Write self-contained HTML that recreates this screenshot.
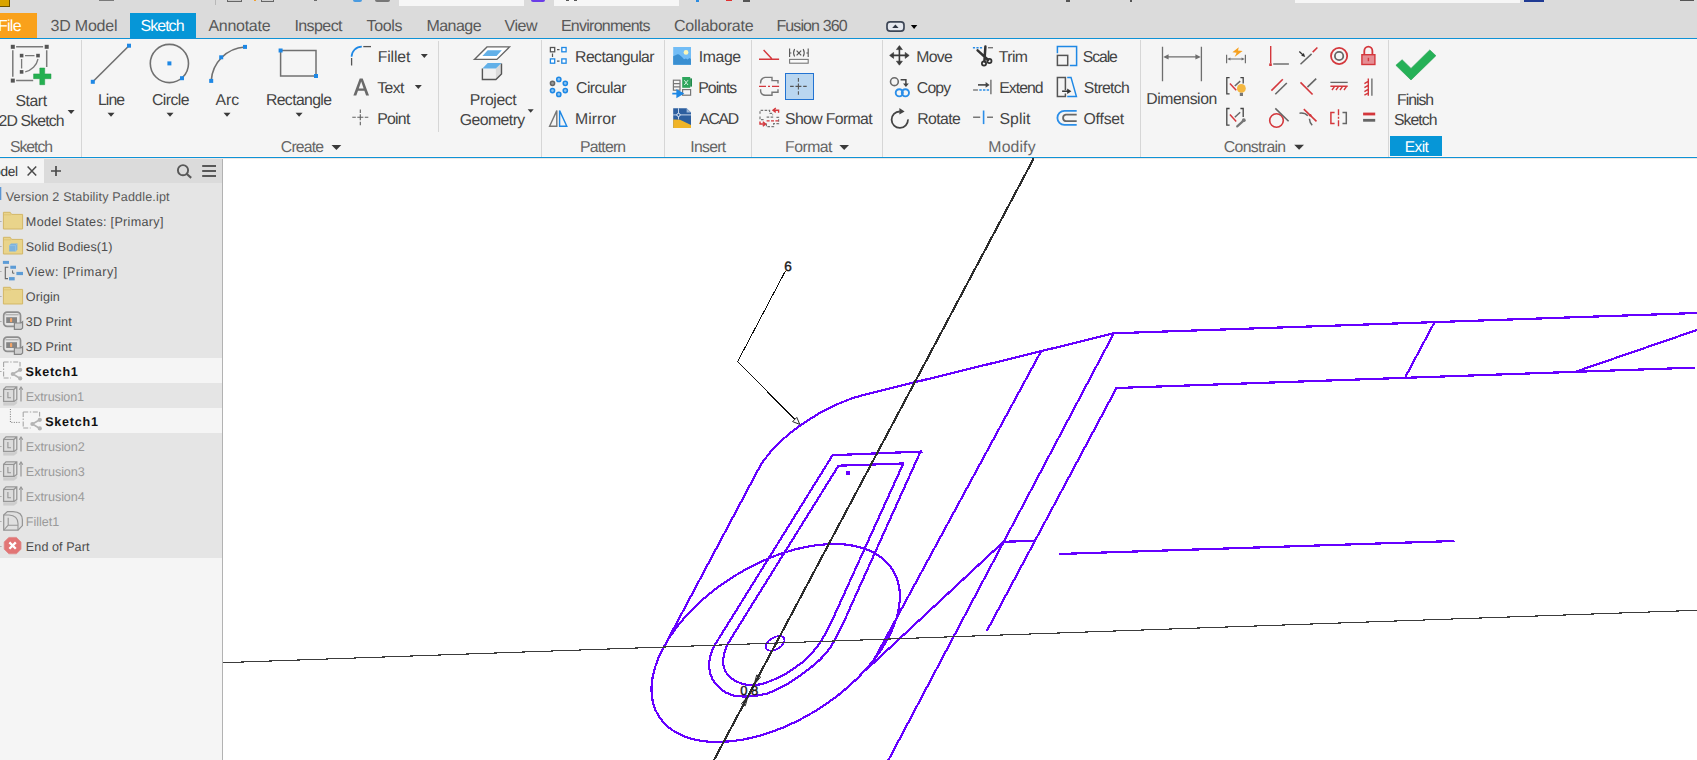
<!DOCTYPE html>
<html lang="en"><head><meta charset="utf-8"><title>Autodesk Inventor - Sketch</title>
<style>
html,body{margin:0;padding:0;background:#fff;}
body{font-family:"Liberation Sans",sans-serif;}
#app{position:relative;width:1697px;height:760px;overflow:hidden;background:#ffffff;}
.abs,.t,.ov{position:absolute;}
.t{z-index:3;white-space:pre;line-height:1;text-rendering:geometricPrecision;font-family:"Liberation Sans",sans-serif;}
.ov{overflow:hidden;display:block;}
.sep{position:absolute;width:1px;background:#d6d6d6;}

</style></head>
<body>
<div id="app">
<!-- title strip + tab bar -->
<div class="abs" style="left:0;top:0;width:1697px;height:38px;background:#dbdbdb"></div>
<div class="abs" style="left:0;top:0;width:10px;height:7px;background:#d9a400;border-right:1px solid #6b5200;border-bottom:1px solid #6b5200;box-sizing:border-box"></div>
<div class="abs" style="left:99px;top:0;width:15px;height:1px;background:#7a7a7a"></div>
<div class="abs" style="left:215px;top:0;width:1px;height:5px;background:#b8b8b8"></div>
<div class="abs" style="left:226.5px;top:0;width:15px;height:2px;box-sizing:border-box;border:1px solid #666;border-top:none;background:#c8c8c8"></div>
<div class="abs" style="left:254px;top:0;width:2px;height:1px;background:#f0a030"></div>
<div class="abs" style="left:261px;top:0;width:12.5px;height:2px;box-sizing:border-box;border:1px solid #666;border-top:none;background:#d0d0d0"></div>
<div class="abs" style="left:314px;top:0;width:3px;height:1px;background:#6a6a6a"></div>
<div class="abs" style="left:353px;top:0;width:9px;height:2px;background:#4a9be0;border-radius:0 0 4px 4px"></div>
<div class="abs" style="left:375px;top:0;width:15px;height:2px;background:#777;border-radius:0 0 7px 7px"></div>
<div class="abs" style="left:399px;top:0;width:125px;height:5.5px;background:#f6f6f6"></div>
<div class="abs" style="left:531px;top:0;width:14px;height:2px;background:#6a3de8;border-radius:0 0 7px 7px"></div>
<div class="abs" style="left:554px;top:0;width:125px;height:5.5px;background:#f6f6f6"></div>
<div class="abs" style="left:566px;top:0;width:3px;height:1px;background:#555"></div>
<div class="abs" style="left:574px;top:0;width:3px;height:1px;background:#555"></div>
<div class="abs" style="left:696px;top:0;width:3px;height:1.5px;background:#2a8be0"></div>
<div class="abs" style="left:726px;top:0;width:6px;height:1px;background:#e03030"></div>
<div class="abs" style="left:743px;top:0;width:7px;height:1.5px;background:#555"></div>
<div class="abs" style="left:1066px;top:0;width:4px;height:1.5px;background:#555"></div>
<div class="abs" style="left:1130px;top:0;width:2px;height:2px;background:#555"></div>
<div class="abs" style="left:1295px;top:0;width:225px;height:3.3px;background:#f6f6f6"></div>
<div class="abs" style="left:1524px;top:0;width:20px;height:2px;background:#1f3a93"></div>
<div class="abs" style="left:1680px;top:0;width:14px;height:1px;background:#555"></div>
<!-- tabs -->
<div class="abs" style="left:0;top:13px;width:37px;height:25px;background:#f9a11b"></div>
<div class="abs" style="left:130px;top:13px;width:66px;height:25px;background:#0696d7"></div>
<!-- ribbon -->
<div class="abs" style="left:0;top:37.8px;width:1697px;height:1.5px;background:#0f92d6"></div>
<div class="abs" style="left:0;top:39.3px;width:1697px;height:117.5px;background:#f5f5f5"></div>
<div class="abs" style="left:0;top:156.7px;width:1697px;height:1.6px;background:#0f92d6"></div>
<div class="abs" style="left:0;top:155.9px;width:1697px;height:0.9px;background:#fcf9f6"></div>
<div class="abs" style="left:0;top:158.3px;width:1697px;height:0.8px;background:#eee7e4"></div>
<div class="sep" style="left:81px;top:40px;height:117px"></div>
<div class="sep" style="left:438px;top:41px;height:90.8px"></div>
<div class="sep" style="left:541px;top:40px;height:117px"></div>
<div class="sep" style="left:664px;top:40px;height:117px"></div>
<div class="sep" style="left:751px;top:40px;height:117px"></div>
<div class="sep" style="left:882px;top:40px;height:117px"></div>
<div class="sep" style="left:1140px;top:40px;height:117px"></div>
<div class="sep" style="left:1388px;top:40px;height:117px"></div>
<div class="abs" style="left:784.8px;top:72.8px;width:29px;height:27px;box-sizing:border-box;background:#b9d6f0;border:1.2px solid #2273d2"></div>
<div class="abs" style="left:1390.3px;top:136.2px;width:51.7px;height:19.8px;background:#0696d7"></div>
<!-- browser -->
<div class="abs" style="left:0;top:158.9px;width:222px;height:399.1px;background:#e5e5e5"></div>
<div class="abs" style="left:0;top:158.9px;width:222px;height:24.2px;background:#dbdbdb"></div>
<div class="abs" style="left:0;top:158.9px;width:44px;height:24.2px;background:#f4f4f4"></div>
<div class="abs" style="left:0;top:358.3px;width:222px;height:24.6px;background:#f5f5f5"></div>
<div class="abs" style="left:0;top:408.3px;width:222px;height:24.6px;background:#f5f5f5"></div>
<div class="abs" style="left:0;top:558px;width:222px;height:202px;background:#f5f5f5"></div>
<div class="abs" style="left:221.8px;top:159px;width:1.2px;height:601px;background:#b2b2b2"></div>

<span class="t" style="left:-2.06px;top:19.00px;font-size:16px;color:#ffffff;letter-spacing:-0.720px">File</span>
<span class="t" style="left:50.44px;top:19.00px;font-size:16px;color:#585858;letter-spacing:-0.195px">3D Model</span>
<span class="t" style="left:140.44px;top:19.00px;font-size:16px;color:#ffffff;letter-spacing:-0.960px">Sketch</span>
<span class="t" style="left:208.44px;top:19.00px;font-size:16px;color:#585858;letter-spacing:-0.278px">Annotate</span>
<span class="t" style="left:294.44px;top:19.00px;font-size:16px;color:#585858;letter-spacing:-0.579px">Inspect</span>
<span class="t" style="left:366.44px;top:19.00px;font-size:16px;color:#585858;letter-spacing:-0.310px">Tools</span>
<span class="t" style="left:426.44px;top:19.00px;font-size:16px;color:#585858;letter-spacing:-0.542px">Manage</span>
<span class="t" style="left:504.44px;top:19.00px;font-size:16px;color:#585858;letter-spacing:-0.424px">View</span>
<span class="t" style="left:560.94px;top:19.00px;font-size:16px;color:#585858;letter-spacing:-0.746px">Environments</span>
<span class="t" style="left:674.04px;top:19.00px;font-size:16px;color:#585858;letter-spacing:-0.231px">Collaborate</span>
<span class="t" style="left:776.44px;top:19.00px;font-size:16px;color:#585858;letter-spacing:-0.895px">Fusion 360</span>
<span class="t" style="left:15.45px;top:94.00px;font-size:15.8px;color:#444444;letter-spacing:-0.442px">Start</span>
<span class="t" style="left:-1.55px;top:114.00px;font-size:15.8px;color:#444444;letter-spacing:-0.848px">2D Sketch</span>
<span class="t" style="left:9.95px;top:140.00px;font-size:15.8px;color:#666666;letter-spacing:-1.038px">Sketch</span>
<span class="t" style="left:97.95px;top:93.00px;font-size:15.8px;color:#444444;letter-spacing:-0.890px">Line</span>
<span class="t" style="left:151.95px;top:93.00px;font-size:15.8px;color:#444444;letter-spacing:-0.554px">Circle</span>
<span class="t" style="left:215.45px;top:93.00px;font-size:15.8px;color:#444444;letter-spacing:-0.049px">Arc</span>
<span class="t" style="left:265.95px;top:93.00px;font-size:15.8px;color:#444444;letter-spacing:-0.629px">Rectangle</span>
<span class="t" style="left:280.85px;top:140.00px;font-size:15.8px;color:#666666;letter-spacing:-0.843px">Create</span>
<span class="t" style="left:377.65px;top:50.00px;font-size:15.8px;color:#444444;letter-spacing:-0.131px">Fillet</span>
<span class="t" style="left:377.15px;top:81.00px;font-size:15.8px;color:#444444;letter-spacing:-0.593px">Text</span>
<span class="t" style="left:377.15px;top:112.00px;font-size:15.8px;color:#444444;letter-spacing:-0.702px">Point</span>
<span class="t" style="left:469.85px;top:93.00px;font-size:15.8px;color:#444444;letter-spacing:-0.378px">Project</span>
<span class="t" style="left:459.75px;top:113.00px;font-size:15.8px;color:#444444;letter-spacing:-0.550px">Geometry</span>
<span class="t" style="left:575.05px;top:50.00px;font-size:15.8px;color:#444444;letter-spacing:-0.568px">Rectangular</span>
<span class="t" style="left:576.05px;top:81.00px;font-size:15.8px;color:#444444;letter-spacing:-0.574px">Circular</span>
<span class="t" style="left:575.05px;top:112.00px;font-size:15.8px;color:#444444;letter-spacing:0.011px">Mirror</span>
<span class="t" style="left:580.05px;top:140.00px;font-size:15.8px;color:#666666;letter-spacing:-0.805px">Pattern</span>
<span class="t" style="left:698.85px;top:50.00px;font-size:15.8px;color:#444444;letter-spacing:-0.400px">Image</span>
<span class="t" style="left:698.35px;top:81.00px;font-size:15.8px;color:#444444;letter-spacing:-1.020px">Points</span>
<span class="t" style="left:699.15px;top:112.00px;font-size:15.8px;color:#444444;letter-spacing:-1.295px">ACAD</span>
<span class="t" style="left:690.35px;top:140.00px;font-size:15.8px;color:#666666;letter-spacing:-0.722px">Insert</span>
<span class="t" style="left:785.05px;top:112.00px;font-size:15.8px;color:#444444;letter-spacing:-0.643px">Show Format</span>
<span class="t" style="left:785.05px;top:140.00px;font-size:15.8px;color:#666666;letter-spacing:-0.525px">Format</span>
<span class="t" style="left:916.35px;top:50.00px;font-size:15.8px;color:#444444;letter-spacing:-0.745px">Move</span>
<span class="t" style="left:916.85px;top:81.00px;font-size:15.8px;color:#444444;letter-spacing:-0.862px">Copy</span>
<span class="t" style="left:917.15px;top:112.00px;font-size:15.8px;color:#444444;letter-spacing:-0.568px">Rotate</span>
<span class="t" style="left:998.75px;top:50.00px;font-size:15.8px;color:#444444;letter-spacing:-0.598px">Trim</span>
<span class="t" style="left:999.25px;top:81.00px;font-size:15.8px;color:#444444;letter-spacing:-0.956px">Extend</span>
<span class="t" style="left:999.55px;top:112.00px;font-size:15.8px;color:#444444;letter-spacing:0.018px">Split</span>
<span class="t" style="left:1082.75px;top:50.00px;font-size:15.8px;color:#444444;letter-spacing:-1.102px">Scale</span>
<span class="t" style="left:1083.85px;top:81.00px;font-size:15.8px;color:#444444;letter-spacing:-0.673px">Stretch</span>
<span class="t" style="left:1083.55px;top:112.00px;font-size:15.8px;color:#444444;letter-spacing:-0.231px">Offset</span>
<span class="t" style="left:988.35px;top:140.00px;font-size:15.8px;color:#666666;letter-spacing:0.135px">Modify</span>
<span class="t" style="left:1146.35px;top:92.00px;font-size:15.8px;color:#444444;letter-spacing:-0.467px">Dimension</span>
<span class="t" style="left:1223.85px;top:140.00px;font-size:15.8px;color:#666666;letter-spacing:-0.663px">Constrain</span>
<span class="t" style="left:1397.05px;top:93.00px;font-size:15.8px;color:#444444;letter-spacing:-1.007px">Finish</span>
<span class="t" style="left:1393.95px;top:113.00px;font-size:15.8px;color:#444444;letter-spacing:-0.958px">Sketch</span>
<span class="t" style="left:1404.76px;top:140.00px;font-size:15.5px;color:#ffffff;letter-spacing:-0.586px">Exit</span>
<span class="t" style="left:-6.68px;top:165.00px;font-size:13.6px;color:#333333;letter-spacing:-0.350px">odel</span>
<span class="t" style="left:5.66px;top:191.00px;font-size:12.6px;color:#5a5a5a;letter-spacing:0.150px">Version 2 Stability Paddle.ipt</span>
<span class="t" style="left:25.86px;top:216.00px;font-size:12.6px;color:#4d4d4d;letter-spacing:0.304px">Model States: [Primary]</span>
<span class="t" style="left:25.86px;top:241.00px;font-size:12.6px;color:#4d4d4d;letter-spacing:0.077px">Solid Bodies(1)</span>
<span class="t" style="left:25.86px;top:266.00px;font-size:12.6px;color:#4d4d4d;letter-spacing:0.502px">View: [Primary]</span>
<span class="t" style="left:25.86px;top:291.00px;font-size:12.6px;color:#4d4d4d;letter-spacing:0.078px">Origin</span>
<span class="t" style="left:25.86px;top:316.00px;font-size:12.6px;color:#4d4d4d;letter-spacing:0.040px">3D Print</span>
<span class="t" style="left:25.86px;top:341.00px;font-size:12.6px;color:#4d4d4d;letter-spacing:0.040px">3D Print</span>
<span class="t" style="left:25.56px;top:366.00px;font-size:12.6px;color:#111111;letter-spacing:0.645px;font-weight:700">Sketch1</span>
<span class="t" style="left:25.86px;top:391.00px;font-size:12.6px;color:#9a9a9a;letter-spacing:-0.148px">Extrusion1</span>
<span class="t" style="left:45.16px;top:416.00px;font-size:12.6px;color:#111111;letter-spacing:0.745px;font-weight:700">Sketch1</span>
<span class="t" style="left:25.86px;top:441.00px;font-size:12.6px;color:#9a9a9a;letter-spacing:-0.070px">Extrusion2</span>
<span class="t" style="left:25.86px;top:466.00px;font-size:12.6px;color:#9a9a9a;letter-spacing:-0.070px">Extrusion3</span>
<span class="t" style="left:25.86px;top:491.00px;font-size:12.6px;color:#9a9a9a;letter-spacing:-0.070px">Extrusion4</span>
<span class="t" style="left:25.86px;top:516.00px;font-size:12.6px;color:#9a9a9a;letter-spacing:-0.035px">Fillet1</span>
<span class="t" style="left:25.86px;top:541.00px;font-size:12.6px;color:#4d4d4d;letter-spacing:0.057px">End of Part</span>
<span class="t" style="left:784.22px;top:260.00px;font-size:13.6px;color:#111111;letter-spacing:0.000px;-webkit-text-stroke:0.4px #222">6</span>
<span class="t" style="left:740.34px;top:684.00px;font-size:13.0px;color:#111111;letter-spacing:-0.034px;-webkit-text-stroke:0.4px #222">0.8</span>
<svg class="ov" width="1697" height="158" viewBox="0 0 1697 158" style="left:0;top:0">
<defs>
<path id="dd" d="M0,0 L7,0 L3.5,4 Z" fill="#3a3a3a"/>
<rect id="bsq" x="-2" y="-2" width="4" height="4" fill="#1e88e5"/>
<rect id="gsq" x="-2" y="-2" width="4" height="4" fill="#555"/>
</defs>
<!-- tab bar minimize toggle -->
<rect x="887" y="21.8" width="17" height="9.4" rx="3.2" fill="#e6e9ef" stroke="#3d4656" stroke-width="1.7"/>
<path d="M892.2,27.9 L895.4,24.4 L898.6,27.9 Z" fill="#2c3442"/>
<path d="M910.9,25.1 L917.3,25.1 L914.1,28.9 Z" fill="#000"/>
<!-- dropdown arrows -->
<use href="#dd" x="67.6" y="110"/>
<use href="#dd" x="107.5" y="112.8"/>
<use href="#dd" x="166.5" y="112.8"/>
<use href="#dd" x="223.5" y="112.8"/>
<use href="#dd" x="295.6" y="112.8"/>
<path d="M331.5,145 L341.3,145 L336.4,150 Z" fill="#3a3a3a"/>
<use href="#dd" x="420.8" y="54"/>
<use href="#dd" x="414.8" y="85"/>
<path d="M527.7,109.3 L533.7,109.3 L530.7,112.8 Z" fill="#3a3a3a"/>
<path d="M839.4,145 L849,145 L844.2,150 Z" fill="#3a3a3a"/>
<path d="M1294.2,144.8 L1304,144.8 L1299.1,149.8 Z" fill="#3a3a3a"/>
<!-- Start 2D Sketch -->
<g stroke="#7a7a7a" stroke-width="1.5" fill="none">
<path d="M16.1,46.8 H43.1 M12.8,50.2 V76.8 M46.7,50.2 V67 M16.1,80.6 H33.2"/>
<path d="M25,55.6 H34.5 M21.6,59 V68.5" stroke-width="1.3"/>
<path d="M38,59 A16.4,16.4 0 0 1 25.2,71.8" stroke-width="1.3"/>
</g>
<use href="#gsq" x="12.8" y="46.8"/><use href="#gsq" x="46.7" y="46.8"/><use href="#gsq" x="12.8" y="80.6"/>
<rect x="19.8" y="53.8" width="3.6" height="3.6" fill="#555"/><rect x="36.2" y="53.8" width="3.6" height="3.6" fill="#555"/><rect x="19.8" y="70.1" width="3.6" height="3.6" fill="#555"/>
<path d="M39.8,68 H44.7 V73.9 H51 V78.7 H44.7 V84.7 H39.8 V78.7 H33.6 V73.9 H39.8 Z" fill="#25b050" stroke="#1f9a45" stroke-width="0.5"/>
<!-- Line -->
<path d="M92.8,81.8 L129,45.7" stroke="#707070" stroke-width="1.6" fill="none"/>
<use href="#bsq" x="92.8" y="81.8"/><use href="#bsq" x="129" y="45.7"/>
<!-- Circle -->
<circle cx="169.4" cy="63.5" r="19.1" stroke="#707070" stroke-width="1.6" fill="none"/>
<use href="#bsq" x="169.4" y="63.4"/><use href="#bsq" x="182" y="78.2"/>
<!-- Arc -->
<path d="M211.2,80.9 A36,36 0 0 1 245,47" stroke="#707070" stroke-width="1.6" fill="none"/>
<use href="#bsq" x="211.2" y="80.9"/><use href="#bsq" x="245" y="46.9"/><use href="#bsq" x="221.2" y="57.3"/>
<!-- Rectangle -->
<rect x="280.6" y="50.5" width="35.4" height="25.5" stroke="#707070" stroke-width="1.5" fill="none"/>
<use href="#bsq" x="280.6" y="50.5"/><use href="#bsq" x="316" y="76"/>
<!-- Fillet -->
<path d="M363.3,46.6 H371" stroke="#555" stroke-width="1.3" fill="none"/>
<path d="M351.6,58 V65.5" stroke="#555" stroke-width="1.3" fill="none"/>
<path d="M361.8,46.6 A10.2,10.2 0 0 0 351.6,56.8" stroke="#1e88e5" stroke-width="1.6" fill="none"/>
<!-- Text A -->
<path d="M353.4,95.6 L359.7,78.6 H362.7 L369,95.6 H366.1 L364.4,90.8 H358 L356.3,95.6 Z M358.8,88.5 H363.6 L361.2,81.6 Z" fill="#6a6a6a" fill-rule="evenodd"/>
<!-- Point -->
<path d="M352.3,117.2 H355.8 M357.3,117.2 H363.3 M364.8,117.2 H368.3 M360.3,109.6 V113 M360.3,114.2 V120.2 M360.3,121.7 V125.2" stroke="#606060" stroke-width="1.1" fill="none"/>
<!-- Project Geometry -->
<path d="M474.4,59.4 L487,46.9 L509.5,46.9 L496.9,59.4 Z" fill="#ffffff" stroke="#666" stroke-width="1.4"/>
<path d="M482.4,56.1 L487.7,50.3 L501.8,50.3 L496.6,56.1 Z" fill="#62b0e8"/>
<path d="M482.4,68.6 H495.9 V79.5 H482.4 Z" fill="#f0f0f0"/>
<path d="M495.9,68.6 L501.5,63 V74 L495.9,79.5 Z" fill="#dadada"/>
<path d="M482.4,68.6 L487.7,63 L501.5,63 L495.9,68.6 Z" fill="#62b0e8"/>
<path d="M482.4,68.6 V79.5 H495.9 L501.5,74 V63.4" fill="none" stroke="#555" stroke-width="1.4"/>
<!-- Rectangular pattern -->
<g fill="#fff" stroke-width="1.3">
<rect x="550.4" y="47.5" width="4.3" height="4.3" stroke="#555"/>
<rect x="561.8" y="47.5" width="4.3" height="4.3" stroke="#1e88e5"/>
<rect x="550.4" y="58.9" width="4.3" height="4.3" stroke="#1e88e5"/>
<rect x="561.8" y="58.9" width="4.3" height="4.3" stroke="#1e88e5"/>
</g>
<path d="M557,49.7 H559.5 M552.5,53.5 V57 M557,61.1 H559.5" stroke="#555" stroke-width="1.2"/>
<!-- Circular pattern -->
<g stroke-width="1.5" fill="#8cc4f2" stroke="#1e88e5">
<circle cx="558.8" cy="79.4" r="2.1"/><circle cx="565.3" cy="83.3" r="2.1"/><circle cx="565.3" cy="90.6" r="2.1"/><circle cx="558.8" cy="94.4" r="2.1"/><circle cx="552.5" cy="90.6" r="2.1"/>
<circle cx="552.5" cy="83.3" r="2.1" fill="#999" stroke="#666"/>
</g>
<!-- Mirror -->
<path d="M549.6,126.2 L556.8,110.6 V126.2 Z" stroke="#777" stroke-width="1.4" fill="none"/>
<path d="M559.6,110.6 V126.2 H566.8 Z" stroke="#1e88e5" stroke-width="1.4" fill="none"/>
<!-- Image -->
<rect x="673.2" y="47" width="17.8" height="17.8" fill="#72bdf6"/>
<path d="M673.2,56.2 L676,54.9 Q678.3,53.6 680.2,55.4 L682,57 L684,59.3 L686,58.4 L687.5,59.6 L689.5,58 L691,59 V64.8 H673.2 Z" fill="#3a8fd1"/>
<circle cx="686" cy="52.4" r="2.4" fill="#fbf6b8"/>
<!-- Points -->
<g stroke="#777" stroke-width="1.2" fill="none"><rect x="673.4" y="80.2" width="6.6" height="10"/><path d="M673.4,83.6 H680 M673.4,86.9 H680"/><rect x="682.6" y="89.6" width="8" height="5.6"/></g>
<rect x="682.2" y="77" width="8" height="10.8" fill="#2da55c"/><rect x="690.2" y="78.4" width="1.8" height="8.2" fill="#1f8a49"/>
<path d="M684.3,80.2 L688,85 M688,80.2 L684.3,85" stroke="#d6f2e0" stroke-width="1"/>
<path d="M672.3,93.6 H679 M677.2,90.4 L682.6,93.6 L677.2,96.8 Z" stroke="#1e88e5" stroke-width="1.7" fill="#1e88e5"/>
<!-- ACAD -->
<path d="M673.2,108.2 H686.6 L691,112.6 V128 H673.2 Z" fill="#2d5f9f"/>
<path d="M686.6,108.2 L691,112.6 H686.6 Z" fill="#9db8da"/>
<path d="M673.2,114.9 H691 M678.5,108.2 V119.5" stroke="#c8d6ea" stroke-width="1"/>
<circle cx="678.5" cy="114.9" r="1.6" fill="#2d5f9f" stroke="#e6eef8" stroke-width="0.9"/>
<path d="M673.2,119.6 L680,119.8 L691,125 V128 H673.2 Z" fill="#f0b428"/>
<!-- Format: construction -->
<path d="M759,59.2 H779.1 M763.6,50.1 L771.8,58.8" stroke="#d4373c" stroke-width="1.4" fill="none"/>
<!-- Format: driven dim |(x)| -->
<g stroke="#555" stroke-width="1.1" fill="none">
<path d="M789.6,48.6 V57 M808.2,48.6 V57 M789.6,53 H791.4 M806.4,53 H808.2"/>
<path d="M794.6,49 Q792.6,52.8 794.6,56.6 M803.2,49 Q805.2,52.8 803.2,56.6"/>
<path d="M796.6,50.6 L801.2,55.4 M801.2,50.6 L796.6,55.4" stroke-width="1.2"/>
<rect x="789.6" y="59.4" width="18.6" height="3.8" fill="#fafafa" stroke="#777"/>
</g>
<!-- Format: centerline -->
<path d="M778,83.6 V80.6 H772 V77.4 H765 Q760.6,78.2 760.6,82.4 V83.6 M760.6,89.2 V90.4 Q760.6,94.6 765,95.2 H772 V92.2 H778 V89.2" stroke="#777" stroke-width="1.4" fill="none"/>
<path d="M759,86.4 H766 M768,86.4 H770 M772,86.4 H779.1" stroke="#d4373c" stroke-width="1.4"/>
<!-- Format: point cross (selected) -->
<path d="M790.1,86.4 H793.7 M795.5,86.4 H801.4 M803.2,86.4 H806.7 M798.4,78.1 V81.7 M798.4,83.5 V89.4 M798.4,91.2 V94.7" stroke="#555" stroke-width="1.1"/>
<!-- Show Format -->
<g fill="none" stroke="#777" stroke-width="1.2" stroke-dasharray="2.6 1.4">
<path d="M760,113.8 V110.4 H769.6 V113.4 H772.4 M760,116.6 V119.6 H764.4"/>
<path d="M766.6,117.2 H772.6 V114.4 M776.4,117.4 H778.6 V123.6 H773.6 V126.6 H766.4 V123.4"/>
</g>
<path d="M766.6,120.9 H779" stroke="#d4373c" stroke-width="1.4" stroke-dasharray="3 1.4" fill="none"/>
<path d="M778.6,112.8 V110.2 H773.6 M775.8,108 L773,110.2 L775.8,112.4" stroke="#d4373c" stroke-width="1.4" fill="none"/>
<path d="M760,121.4 V124 H765 M762.8,121.8 L765.6,124 L762.8,126.2" stroke="#d4373c" stroke-width="1.4" fill="none"/>
<!-- Move -->
<g stroke="#3a3a3a" stroke-width="1.6" fill="#3a3a3a">
<path d="M891.5,55.4 H907.4 M899.4,47.4 V63.4" fill="none"/>
<path d="M899.4,45.6 L902.4,49.6 H896.4 Z M899.4,65.2 L902.4,61.2 H896.4 Z M889.6,55.4 L893.6,52.4 V58.4 Z M909.2,55.4 L905.2,52.4 V58.4 Z" stroke-width="0.6"/>
</g>
<!-- Copy -->
<circle cx="894.4" cy="81.7" r="3.9" stroke="#6a6a6a" stroke-width="1.6" fill="none"/>
<path d="M900.6,79.7 H905.9 V84.2" stroke="#444" stroke-width="1.5" fill="none"/>
<path d="M903,83.6 H908.8 L905.9,87 Z" fill="#444"/>
<circle cx="899.3" cy="92.8" r="3.6" stroke="#2b8ee8" stroke-width="1.9" fill="none"/>
<circle cx="905.4" cy="92.8" r="3.6" stroke="#2b8ee8" stroke-width="1.9" fill="none"/>
<!-- Rotate -->
<path d="M899.8,111.5 A8.2,8.2 0 1 0 908,119.4" stroke="#444" stroke-width="1.8" fill="none"/>
<path d="M899.4,108 L904.6,111.4 L899.4,114.6 Z" fill="#444"/>
<!-- Trim -->
<path d="M972.9,47.7 H983.4" stroke="#2b8ee8" stroke-width="1.5" stroke-dasharray="2.2 1.3"/>
<path d="M988,47.7 H993" stroke="#777" stroke-width="1.4"/>
<path d="M977.6,50.4 L988.2,60 M985.4,46.6 L984.4,61.4" stroke="#333" stroke-width="2.5" stroke-linecap="round"/>
<circle cx="984" cy="63.4" r="2.1" stroke="#333" stroke-width="1.8" fill="none"/>
<circle cx="989.4" cy="61" r="2.1" stroke="#333" stroke-width="1.8" fill="none"/>
<!-- Extend -->
<path d="M978,84.9 H987" stroke="#444" stroke-width="1.6"/>
<path d="M985.6,82 L989.6,84.9 L985.6,87.8 Z" fill="#444"/>
<path d="M990.9,79.7 V94.2" stroke="#777" stroke-width="1.5"/>
<path d="M973.1,90 H977.9" stroke="#777" stroke-width="1.4"/>
<path d="M979.3,90 H989.4" stroke="#2b8ee8" stroke-width="1.5" stroke-dasharray="2.4 1.3"/>
<!-- Split -->
<path d="M973.1,117.3 H980.2 M987.1,117.3 H993" stroke="#777" stroke-width="1.4"/>
<path d="M983.6,110.5 V124.1" stroke="#2b8ee8" stroke-width="1.6"/>
<!-- Scale -->
<path d="M1057.4,53.3 V46.6 H1076.6 V65.4 H1069.8" stroke="#1e88e5" stroke-width="1.5" fill="none"/>
<rect x="1057.4" y="55.4" width="10.3" height="10" stroke="#555" stroke-width="1.5" fill="none"/>
<!-- Stretch -->
<path d="M1065.4,90 V77.4 H1057.4 V96.4 H1065.4 V93.4" stroke="#555" stroke-width="1.5" fill="none"/>
<path d="M1067.2,77.4 H1071 L1076.4,96.4 H1067.2" stroke="#1e88e5" stroke-width="1.5" fill="none"/>
<path d="M1062.1,91.2 H1068.4" stroke="#333" stroke-width="1.5"/><path d="M1067.2,88.4 L1071.4,91.2 L1067.2,94 Z" fill="#333"/>
<!-- Offset -->
<path d="M1076.7,110.9 H1064.4 A7,7 0 0 0 1064.4,124.9 H1076.7" stroke="#2b8ee8" stroke-width="1.8" fill="none"/>
<path d="M1076.7,114.7 H1065.8 A3.3,3.3 0 0 0 1065.8,121.2 H1076.7" stroke="#666" stroke-width="1.8" fill="none"/>
<!-- Dimension -->
<path d="M1162.5,46.7 V81.2 M1201.4,46.7 V81.2 M1166,56.9 H1198" stroke="#6e6e6e" stroke-width="1.3" fill="none"/>
<path d="M1163.2,56.9 L1168.6,54.2 V59.6 Z M1200.8,56.9 L1195.4,54.2 V59.6 Z" fill="#6e6e6e"/>
<!-- Auto dimension -->
<path d="M1226.6,54.8 V63.2 M1245.4,54.8 V63.2 M1229,59 H1243" stroke="#6e6e6e" stroke-width="1.2" fill="none"/>
<path d="M1227.2,59 L1230.4,57.4 V60.6 Z M1244.8,59 L1241.6,57.4 V60.6 Z" fill="#6e6e6e"/>
<path d="M1238.8,47.2 L1232.4,52.2 L1236.6,52.8 L1234.6,57 L1242.6,51 L1238,50.6 Z" fill="#f6a01e"/>
<!-- Show constraints -->
<path d="M1229.6,77.6 H1226.8 V93.8 H1229.6 M1240.4,77.6 H1243.2 V83.4" stroke="#444" stroke-width="1.3" fill="none"/>
<path d="M1229.9,83.6 L1236.2,90.2" stroke="#d4373c" stroke-width="1.5"/><path d="M1234.8,86 L1240.2,81.1" stroke="#666" stroke-width="1.5"/>
<circle cx="1241.4" cy="88.4" r="4.4" fill="#f4b740"/><rect x="1239.8" y="92.8" width="3.2" height="3.2" fill="#777"/>
<!-- Constraint settings -->
<path d="M1229.6,108.5 H1226.8 V125.2 H1229.6 M1240.4,108.5 H1243.2 V117" stroke="#444" stroke-width="1.3" fill="none"/>
<path d="M1229.9,114.6 L1236.2,121.4" stroke="#d4373c" stroke-width="1.5"/><path d="M1234.8,117.2 L1240.2,112.2" stroke="#666" stroke-width="1.5"/>
<path d="M1237.2,126.4 L1243.6,120.6" stroke="#777" stroke-width="2.2" stroke-linecap="round"/><circle cx="1243.8" cy="120.2" r="1.9" fill="#777"/>
<!-- Coincident -->
<path d="M1270.7,46.1 V63.4" stroke="#d4373c" stroke-width="1.4"/><rect x="1269.2" y="63.4" width="2.6" height="2.6" fill="#d4373c"/>
<path d="M1273.2,64 H1288.9" stroke="#666" stroke-width="1.4"/>
<!-- Collinear -->
<path d="M1300.5,64.2 L1311.6,53.9" stroke="#666" stroke-width="1.5"/><path d="M1312.7,52.1 L1317.4,47.5" stroke="#d4373c" stroke-width="1.6"/>
<path d="M1299.3,51.5 L1303.6,55.4" stroke="#333" stroke-width="1.3"/><path d="M1305.2,56.9 L1301.2,55.8 L1303.8,53 Z" fill="#333"/>
<!-- Concentric -->
<circle cx="1339.1" cy="56" r="8.1" stroke="#d4373c" stroke-width="1.8" fill="none"/><circle cx="1339.1" cy="56" r="4.2" stroke="#666" stroke-width="1.8" fill="none"/>
<!-- Fix -->
<path d="M1364.3,54.5 V51 A4,4.4 0 0 1 1372.4,51 V54.5" stroke="#d4373c" stroke-width="1.8" fill="none"/>
<rect x="1361.9" y="54.7" width="13" height="9.8" fill="#e58e94" stroke="#d4373c" stroke-width="1.4"/>
<rect x="1367.7" y="57.8" width="1.4" height="3.4" fill="#d4373c"/>
<!-- Parallel -->
<path d="M1271.4,90.6 L1282.8,79.3" stroke="#d4373c" stroke-width="1.6"/><path d="M1275.3,94.2 L1286.8,83" stroke="#666" stroke-width="1.6"/>
<!-- Perpendicular -->
<path d="M1300.5,82.4 L1312.6,94.5" stroke="#d4373c" stroke-width="1.6"/><path d="M1307.4,87.2 L1316.2,78.7" stroke="#666" stroke-width="1.6"/>
<!-- Horizontal -->
<path d="M1330.4,82.4 H1347.7" stroke="#666" stroke-width="1.3"/>
<path d="M1330.4,86.2 H1347.7 M1334.6,86.4 L1332,90 M1338.6,86.4 L1336,90 M1342.6,86.4 L1340,90 M1346.6,86.4 L1344,90" stroke="#d4373c" stroke-width="1.4" fill="none"/>
<!-- Vertical -->
<path d="M1371.9,78.5 V95.7" stroke="#666" stroke-width="1.3"/>
<path d="M1368.3,78.5 V95.7 M1368.1,81.4 L1364.4,83.6 M1368.1,85.4 L1364.4,87.6 M1368.1,89.4 L1364.4,91.6 M1368.1,93.2 L1364.4,95.2" stroke="#d4373c" stroke-width="1.4" fill="none"/>
<!-- Tangent -->
<circle cx="1276.5" cy="120.5" r="6.8" stroke="#d4373c" stroke-width="1.6" fill="none"/><path d="M1275.3,108.4 L1288.6,121.3" stroke="#666" stroke-width="1.6"/>
<!-- Smooth -->
<path d="M1299.5,113.2 Q1305,112.6 1307.8,115.8 M1309.4,118.8 Q1309.6,122.6 1312.2,125.3" stroke="#666" stroke-width="1.5" fill="none"/>
<path d="M1303.8,109.2 L1316.5,121.3" stroke="#d4373c" stroke-width="1.6"/><circle cx="1310.2" cy="115.3" r="1.3" fill="#d4373c"/>
<!-- Symmetric -->
<path d="M1334.6,112.6 H1330.9 V123.5 H1334.6" stroke="#d4373c" stroke-width="1.5" fill="none"/>
<path d="M1342.5,112.6 H1346.3 V123.5 H1342.5" stroke="#666" stroke-width="1.5" fill="none"/>
<path d="M1338.5,109.2 V126.5" stroke="#d4373c" stroke-width="1.4" stroke-dasharray="6 1.5 2 1.5"/>
<!-- Equal -->
<rect x="1363.1" y="112.6" width="12.1" height="2.8" fill="#d4373c"/><rect x="1363.1" y="118.9" width="12.1" height="2.8" fill="#666"/>
<!-- Finish Sketch check -->
<path d="M1395.9,65.3 L1402.1,59.7 L1411,68.4 L1429.8,49.9 L1435.9,55.7 L1411,80 Z" fill="#25b157" stroke="#1e9c4b" stroke-width="0.6"/>

</svg>
<svg class="ov" width="223" height="602" viewBox="0 158 223 602" style="left:0;top:158px">
<defs>
<g id="folder"><path d="M3.4,0.5 H10.2 L11.6,2.6 H22.6 V17.2 H3.4 Z" fill="#e9d48b" stroke="#d3b766" stroke-width="1"/><path d="M3.9,3 H11" stroke="#dcc070" stroke-width="0.8"/></g>
<g id="print3d">
<rect x="3.7" y="0.8" width="16.8" height="14.2" rx="3.4" fill="#e4e4e4" stroke="#8e8e8e" stroke-width="1.7"/>
<path d="M5.4,3.4 H18.6" stroke="#a0a0a0" stroke-width="1"/>
<rect x="6.2" y="5.8" width="10.8" height="5.8" fill="#858585"/>
<rect x="10" y="6.6" width="2.2" height="4.2" rx="1" fill="#f3a366"/>
<path d="M14.4,11.6 H21 L22.6,10.4 V16.6 L21,18 H14.4 Z" fill="#cfcfcf" stroke="#858585" stroke-width="1.2"/>
</g>
<g id="sk" fill="none">
<path d="M3.6,0 H20" stroke="#a6a6a6" stroke-width="1.1" stroke-dasharray="5 1.6 1.4 1.6"/>
<path d="M3.6,0 V16" stroke="#a6a6a6" stroke-width="1.1" stroke-dasharray="5 1.6 1.4 1.6"/>
<path d="M3.6,16 H11" stroke="#a6a6a6" stroke-width="1.1" stroke-dasharray="5 1.6 1.4 1.6"/>
<path d="M20,0 V4.6" stroke="#a6a6a6" stroke-width="1.1"/>
<path d="M20.2,7.8 L12.8,12 L20.2,16.4" stroke="#b4b4b4" stroke-width="1.7"/>
<circle cx="20.2" cy="7.8" r="2.1" fill="#b4b4b4"/><circle cx="12.8" cy="12" r="2.1" fill="#b4b4b4"/><circle cx="20.2" cy="16.4" r="2.1" fill="#b4b4b4"/>
</g>
<g id="ext" fill="none" stroke="#959595" stroke-width="1.25">
<path d="M3.6,16.2 H14 L16.8,14.2 V17 L14,19 H3.6 Z" fill="#cdcdcd" stroke="#cdcdcd" stroke-width="0.6"/>
<rect x="3.6" y="3.2" width="10.2" height="12" fill="#dcdcdc"/>
<path d="M3.6,3.2 L6,0.7 H16.8 V13.2 L13.8,15.2 M13.8,3.2 L16.8,0.7"/>
<path d="M7.9,5.8 V11.6 H11" stroke-width="1.1"/>
<path d="M21,1.4 V15.4" stroke-width="1.2"/><path d="M19.2,3.6 L21,0.8 L22.8,3.6" stroke-width="1.1"/>
</g>
<g id="fil" fill="none" stroke="#959595" stroke-width="1.25">
<path d="M3.7,4 L7.4,0.6 H13 Q22.4,0.8 22.4,9 V14.6 L18,19.2 H3.7 Z" fill="#e0e0e0"/>
<path d="M3.7,4 H9 Q17.8,4.4 18,12.6 V19.2 M8.2,6.8 V14.2 H17.4 M8.2,14.2 L3.9,19" stroke-width="1.1"/>
</g>
</defs>
<!-- header icons -->
<path d="M27.6,166.6 L36.2,175.4 M36.2,166.6 L27.6,175.4" stroke="#4a4a4a" stroke-width="1.5" fill="none"/>
<path d="M51,171 H61 M56,166 V176" stroke="#4a4a4a" stroke-width="1.7" fill="none"/>
<circle cx="183" cy="170.2" r="5.1" stroke="#585858" stroke-width="1.9" fill="none"/><path d="M186.8,174 L191.2,177.9" stroke="#585858" stroke-width="2.1"/>
<path d="M202.2,166 H216 M202.2,171 H216 M202.2,176 H216" stroke="#585858" stroke-width="2"/>
<!-- file row blue marker -->
<rect x="0" y="187" width="1.3" height="13" fill="#5b96d4"/>
<!-- tree ticks -->
<path d="M0,221.5 H1.6 M0,246.5 H1.6 M0,271.5 H1.6 M0,296.5 H1.6 M0,321.5 H1.6 M0,346.5 H1.6 M0,371.5 H1.6 M0,396.5 H1.6 M0,446.5 H1.6 M0,471.5 H1.6 M0,496.5 H1.6 M0,521.5 H1.6 M0,546.5 H1.6" stroke="#b0b0b0" stroke-width="1"/>
<use href="#folder" y="211.8"/>
<use href="#folder" y="236.8"/>
<path d="M9.2,245.6 L11,243.6 H17.4 V249.6 L15.6,251.6 H9.2 Z" fill="#7db3de"/><path d="M9.2,245.6 H15.6 V251.6 M15.6,245.6 L17.4,243.6" stroke="#9cc6ea" stroke-width="0.7" fill="none"/>
<!-- view icon -->
<g fill="#5d9cd6"><rect x="2.9" y="260.9" width="6.1" height="3"/><rect x="10.3" y="265.7" width="5.7" height="3.1"/><rect x="16.4" y="271.9" width="6.6" height="3.2"/><rect x="9" y="277.1" width="5.7" height="3.3"/></g>
<path d="M8.4,267.2 H5.3 V278.6 H8" stroke="#666" stroke-width="1.1" fill="none"/><path d="M12.6,270.4 V273.2 H14.4" stroke="#666" stroke-width="1" fill="none"/>
<use href="#folder" y="286.8"/>
<use href="#print3d" y="311.4"/>
<use href="#print3d" y="336.4"/>
<use href="#sk" y="362"/>
<use href="#ext" y="386.2"/>
<path d="M10.4,409 V422.4 H21" stroke="#777" stroke-width="1" stroke-dasharray="1 1.4" fill="none"/>
<use href="#sk" x="19.6" y="412"/>
<use href="#ext" y="436.2"/>
<use href="#ext" y="461.2"/>
<use href="#ext" y="486.2"/>
<use href="#fil" y="511"/>
<!-- end of part -->
<path d="M8.8,537.4 H16.4 L21,542 V549.2 L16.4,553.8 H8.8 L4.2,549.2 V542 Z" fill="#e27575" stroke="#de8a8a" stroke-width="0.8"/>
<path d="M9.4,542.4 L15.8,548.8 M15.8,542.4 L9.4,548.8" stroke="#fff" stroke-width="2.3"/>

</svg>
<svg class="ov" width="1474" height="602" viewBox="223 158 1474 602" style="left:223px;top:158px">
<g fill="none" stroke="#6600ff" stroke-width="2.2" stroke-linecap="butt" stroke-linejoin="miter" shape-rendering="crispEdges">
<path d="M1113.8,333.3 L1697,313"/>
<path d="M1116.5,388 L1695,367.6"/>
<path d="M1434.5,322.3 L1405.5,376.7"/>
<path d="M1697.5,329.8 L1576,371.6"/>
<path d="M1058.8,554.0 L1454.5,541.0"/>
<path d="M1113.8,333.3 L868,393.8 C823.9,403.9 774.4,438.3 758,470 L661,652.5"/>
<path d="M1113.8,333.3 L888.2,760.5"/>
<path d="M1116.5,388 L986.8,631"/>
<path d="M1041.4,350.7 L870.8,665.6"/>
<path d="M1035.4,540.8 L1003.4,541.8 L866,670"/>
<ellipse cx="775.7" cy="643" rx="138" ry="78.7" transform="rotate(-32 775.7 643)"/>
<path d="M922.5,451.5 L832.6,455.2 L726.3,626.5 C723.8,630.5 721.2,634.6 718.9,638.4 C716.6,642.2 714.2,645.7 712.6,649.4 C711.0,653.1 710.0,657.1 709.5,660.5 C709.0,663.9 709.0,666.8 709.5,669.9 C710.0,673.0 710.8,676.2 712.6,679.4 C714.4,682.6 717.3,686.3 720.5,688.9 C723.7,691.5 728.0,693.8 731.6,695.0 C735.2,696.2 738.6,696.2 742.0,696.4 C745.4,696.6 748.7,696.5 752.0,696.2 C755.3,695.9 759.0,695.2 762.0,694.6 C765.0,694.0 766.3,694.0 770.0,692.5 C773.7,691.0 779.7,688.2 784.2,685.8 C788.7,683.4 792.7,680.8 796.9,677.9 C801.1,675.0 805.5,671.6 809.5,668.5 C813.5,665.4 817.2,662.4 820.6,659.0 C824.0,655.6 827.4,651.6 830.0,647.9 C832.6,644.2 834.0,641.4 836.4,636.9 C838.8,632.4 841.9,625.9 844.2,621.1 C846.5,616.3 848.0,612.6 849.9,608.3 L920.5,451.6"/>
<path d="M904.5,463.4 L838.5,465.7 L739.0,625.7 C736.5,629.7 733.8,633.9 731.6,637.6 C729.4,641.3 727.4,644.4 726.0,647.9 C724.6,651.4 723.6,655.8 723.2,658.9 C722.8,662.0 723.0,664.2 723.7,666.8 C724.4,669.4 725.6,672.3 727.6,674.7 C729.6,677.1 732.5,679.4 735.5,681.0 C738.5,682.6 742.8,683.9 745.8,684.6 C748.8,685.3 750.9,685.1 753.6,685.0 C756.3,684.9 759.3,684.6 762.0,684.0 C764.7,683.4 766.8,682.4 770.0,681.1 C773.2,679.8 777.1,678.5 781.1,676.4 C785.1,674.3 789.5,671.4 793.7,668.5 C797.9,665.6 802.3,662.7 806.3,659.0 C810.2,655.3 814.2,650.6 817.4,646.4 C820.6,642.2 822.7,638.5 825.3,633.7 C827.9,629.0 830.9,622.7 833.2,617.9 C835.5,613.1 837.1,609.4 839.0,605.2 L903.3,463.5"/>
<ellipse cx="775.2" cy="643.4" rx="10.3" ry="6" stroke-width="1.8" transform="rotate(-32 775.2 643.4)"/>
</g>
<rect x="846" y="471" width="4" height="4" fill="#6600ff" shape-rendering="crispEdges"/>
<rect x="774.2" y="642.4" width="2" height="2" fill="#6600ff"/>
<path d="M223,662.7 L1697,610.3" stroke="#3c3c3c" stroke-width="1.1" fill="none" shape-rendering="crispEdges"/>
<path d="M754.1,684.6 L760.6,677.0 L756.7,675.0 Z" stroke="#111" stroke-width="0.9" fill="#fff"/>
<path d="M747.9,696.4 L745.3,705.8 L741.4,703.8 Z" stroke="#111" stroke-width="0.9" fill="#fff"/>
<path d="M1033.8,158.3 L713.75,760.5" stroke="#2e2e2e" stroke-width="2.1" fill="none" shape-rendering="crispEdges"/>
<path d="M785.5,270.8 L737.6,361.6 L798.6,423.2" stroke="#111" stroke-width="1" fill="none" shape-rendering="crispEdges"/>
<path d="M799.8,424.4 L792.6,421.6 L796.8,417.4 Z" stroke="#111" stroke-width="0.9" fill="#fff"/>
</svg>
</div>
</body></html>
